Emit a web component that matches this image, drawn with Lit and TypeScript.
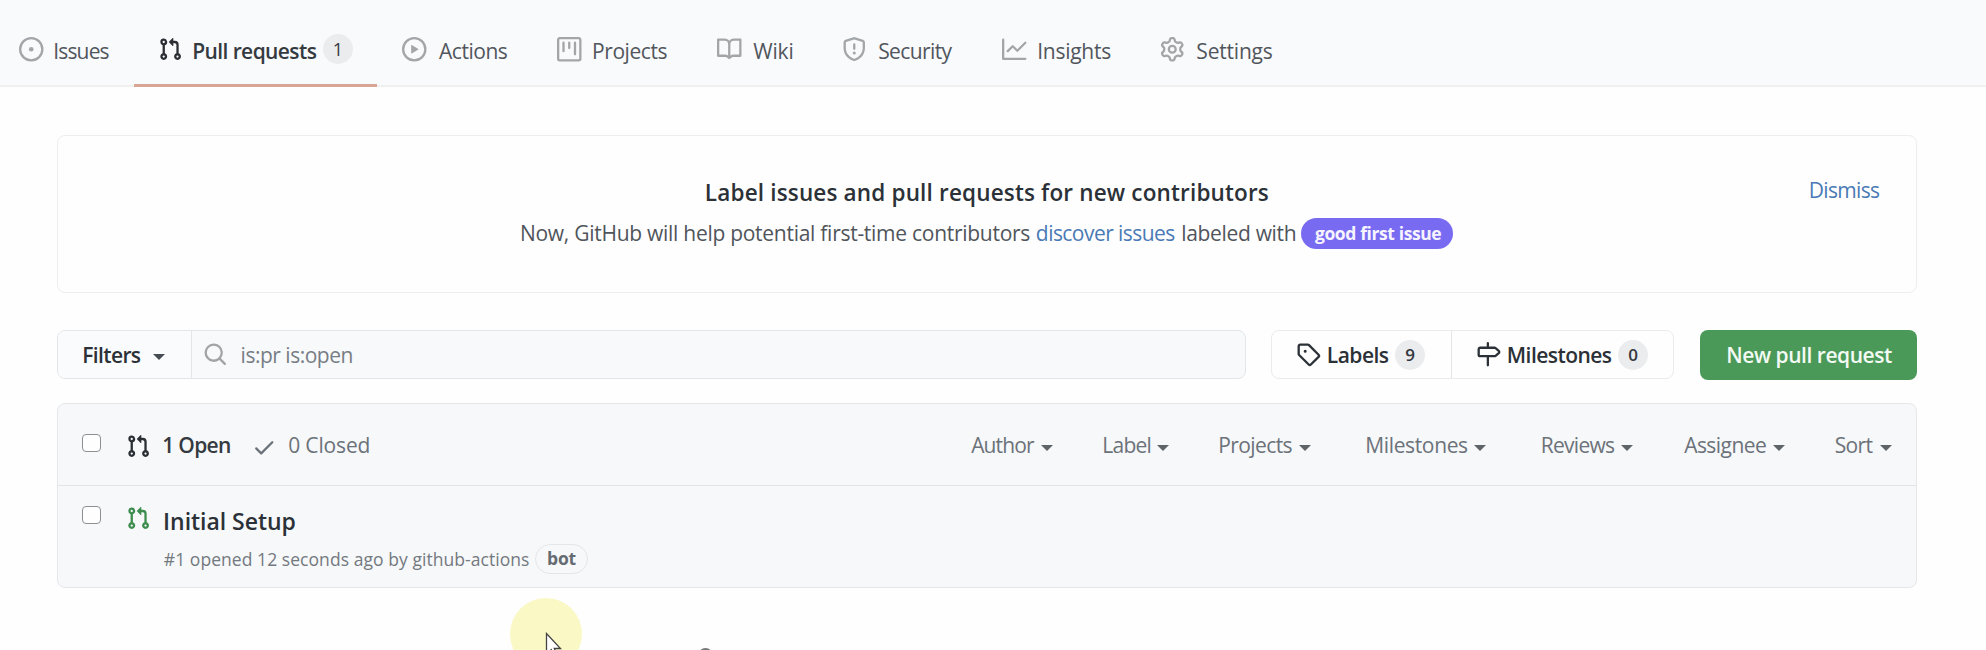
import { LitElement, html, svg, css, TemplateResult } from "lit";
import { customElement, property } from "lit/decorators.js";

const ICONS: Record<string, TemplateResult> = {
  issue: svg`<path d="M8 9.5a1.5 1.5 0 1 0 0-3 1.5 1.5 0 0 0 0 3Z"/><path d="M8 0a8 8 0 1 1 0 16A8 8 0 0 1 8 0ZM1.5 8a6.5 6.5 0 1 0 13 0 6.5 6.5 0 0 0-13 0Z"/>`,
  pr: svg`<path d="M1.5 3.25a2.25 2.25 0 1 1 3 2.122v5.256a2.251 2.251 0 1 1-1.5 0V5.372A2.25 2.25 0 0 1 1.5 3.25Zm5.677-.177L9.573.677A.25.25 0 0 1 10 .854V2.5h1A2.5 2.5 0 0 1 13.5 5v5.628a2.251 2.251 0 1 1-1.5 0V5a1 1 0 0 0-1-1h-1v1.646a.25.25 0 0 1-.427.177L7.177 3.427a.25.25 0 0 1 0-.354ZM3.75 2.5a.75.75 0 1 0 0 1.5.75.75 0 0 0 0-1.5Zm0 9.5a.75.75 0 1 0 0 1.5.75.75 0 0 0 0-1.5Zm8.25.75a.75.75 0 1 0 1.5 0 .75.75 0 0 0-1.5 0Z"/>`,
  play: svg`<path d="M8 0a8 8 0 1 1 0 16A8 8 0 0 1 8 0ZM1.5 8a6.5 6.5 0 1 0 13 0 6.5 6.5 0 0 0-13 0Zm4.879-2.773 4.264 2.559a.25.25 0 0 1 0 .428l-4.264 2.559A.25.25 0 0 1 6 10.559V5.442a.25.25 0 0 1 .379-.215Z"/>`,
  project: svg`<path d="M1.75 0h12.5C15.216 0 16 .784 16 1.75v12.5A1.75 1.75 0 0 1 14.25 16H1.75A1.75 1.75 0 0 1 0 14.25V1.75C0 .784.784 0 1.75 0ZM1.5 1.75v12.5c0 .138.112.25.25.25h12.5a.25.25 0 0 0 .25-.25V1.75a.25.25 0 0 0-.25-.25H1.75a.25.25 0 0 0-.25.25ZM11.75 3a.75.75 0 0 1 .75.75v7.5a.75.75 0 0 1-1.5 0v-7.5a.75.75 0 0 1 .75-.75Zm-8.25.75a.75.75 0 0 1 1.5 0v5.5a.75.75 0 0 1-1.5 0ZM8 3a.75.75 0 0 1 .75.75v3.5a.75.75 0 0 1-1.5 0v-3.5A.75.75 0 0 1 8 3Z"/>`,
  book: svg`<path d="M0 1.75A.75.75 0 0 1 .75 1h4.253c1.227 0 2.317.59 3 1.501A3.743 3.743 0 0 1 11.006 1h4.245a.75.75 0 0 1 .75.75v10.5a.75.75 0 0 1-.75.75h-4.507a2.25 2.25 0 0 0-1.591.659l-.622.621a.75.75 0 0 1-1.06 0l-.622-.621A2.25 2.25 0 0 0 5.258 13H.75a.75.75 0 0 1-.75-.75Zm7.251 10.324.004-5.073-.002-2.253A2.25 2.25 0 0 0 5.003 2.5H1.5v9h3.757a3.75 3.75 0 0 1 1.994.574ZM8.755 4.75l-.004 7.322a3.752 3.752 0 0 1 1.992-.572H14.5v-9h-3.495a2.25 2.25 0 0 0-2.25 2.25Z"/>`,
  shield: svg`<path d="M7.467.133a1.748 1.748 0 0 1 1.066 0l5.25 1.68A1.75 1.75 0 0 1 15 3.48V7c0 1.566-.32 3.182-1.303 4.682-.983 1.498-2.585 2.813-5.032 3.855a1.697 1.697 0 0 1-1.33 0c-2.447-1.042-4.049-2.357-5.032-3.855C1.32 10.182 1 8.566 1 7V3.48a1.75 1.75 0 0 1 1.217-1.667Zm.61 1.429a.25.25 0 0 0-.153 0l-5.25 1.68a.25.25 0 0 0-.174.238V7c0 1.358.275 2.666 1.057 3.86.784 1.194 2.121 2.34 4.366 3.297a.196.196 0 0 0 .154 0c2.245-.956 3.582-2.104 4.366-3.298C13.225 9.666 13.5 8.36 13.5 7V3.48a.251.251 0 0 0-.174-.237l-5.25-1.68ZM8.75 4.75v3a.75.75 0 0 1-1.5 0v-3a.75.75 0 0 1 1.5 0ZM9 10.5a1 1 0 1 1-2 0 1 1 0 0 1 2 0Z"/>`,
  graph: svg`<path d="M1.5 1.75V13.5h13.75a.75.75 0 0 1 0 1.5H.75a.75.75 0 0 1-.75-.75V1.75a.75.75 0 0 1 1.5 0Zm14.28 2.53-5.25 5.25a.75.75 0 0 1-1.06 0L7 7.06 4.28 9.78a.751.751 0 0 1-1.042-.018.751.751 0 0 1-.018-1.042l3.25-3.25a.75.75 0 0 1 1.06 0L10 7.94l4.72-4.72a.751.751 0 0 1 1.042.018.751.751 0 0 1 .018 1.042Z"/>`,
  gear: svg`<path d="M8 0a8.2 8.2 0 0 1 .701.031C9.444.095 9.99.645 10.16 1.29l.288 1.107c.018.066.079.158.212.224.231.114.454.243.668.386.123.082.233.09.299.071l1.103-.303c.644-.176 1.392.021 1.82.63.27.385.506.792.704 1.218.315.675.111 1.422-.364 1.891l-.814.806c-.049.048-.098.147-.088.294.016.257.016.515 0 .772-.01.147.038.246.088.294l.814.806c.475.469.679 1.216.364 1.891a7.977 7.977 0 0 1-.704 1.217c-.428.61-1.176.807-1.82.63l-1.102-.302c-.067-.019-.177-.011-.3.071a5.909 5.909 0 0 1-.668.386c-.133.066-.194.158-.211.224l-.29 1.106c-.168.646-.715 1.196-1.458 1.26a8.006 8.006 0 0 1-1.402 0c-.743-.064-1.289-.614-1.458-1.26l-.289-1.106c-.018-.066-.079-.158-.212-.224a5.738 5.738 0 0 1-.668-.386c-.123-.082-.233-.09-.299-.071l-1.103.303c-.644.176-1.392-.021-1.82-.63a8.12 8.12 0 0 1-.704-1.218c-.315-.675-.111-1.422.363-1.891l.815-.806c.05-.048.098-.147.088-.294a6.214 6.214 0 0 1 0-.772c.01-.147-.038-.246-.088-.294l-.815-.806C.635 6.045.431 5.298.746 4.623a7.92 7.92 0 0 1 .704-1.217c.428-.61 1.176-.807 1.82-.63l1.102.302c.067.019.177.011.3-.071.214-.143.437-.272.668-.386.133-.066.194-.158.211-.224l.29-1.106C6.009.645 6.556.095 7.299.03 7.53.01 7.764 0 8 0Zm-.571 1.525c-.036.003-.108.036-.137.146l-.289 1.105c-.147.561-.549.967-.998 1.189-.173.086-.34.183-.5.29-.417.278-.97.423-1.529.27l-1.103-.303c-.109-.03-.175.016-.195.045-.22.312-.412.644-.573.99-.014.031-.021.11.059.19l.815.806c.411.406.562.957.53 1.456a4.709 4.709 0 0 0 0 .582c.032.499-.119 1.05-.53 1.456l-.815.806c-.081.08-.073.159-.059.19.162.346.353.677.573.989.02.03.085.076.195.046l1.102-.303c.56-.153 1.113-.008 1.53.27.161.107.328.204.501.29.447.222.85.629.997 1.189l.289 1.105c.029.109.101.143.137.146a6.6 6.6 0 0 0 1.142 0c.036-.003.108-.036.137-.146l.289-1.105c.147-.561.549-.967.998-1.189.173-.086.34-.183.5-.29.417-.278.97-.423 1.529-.27l1.103.303c.109.029.175-.016.195-.045.22-.313.411-.644.573-.99.014-.031.021-.11-.059-.19l-.815-.806c-.411-.406-.562-.957-.53-1.456a4.709 4.709 0 0 0 0-.582c-.032-.499.119-1.05.53-1.456l.815-.806c.081-.08.073-.159.059-.19a6.464 6.464 0 0 0-.573-.989c-.02-.03-.085-.076-.195-.046l-1.102.303c-.56.153-1.113.008-1.53-.27a4.44 4.44 0 0 0-.501-.29c-.447-.222-.85-.629-.997-1.189l-.289-1.105c-.029-.11-.101-.143-.137-.146a6.6 6.6 0 0 0-1.142 0ZM11 8a3 3 0 1 1-6 0 3 3 0 0 1 6 0ZM9.5 8a1.5 1.5 0 1 0-3.001.001A1.5 1.5 0 0 0 9.5 8Z"/>`,
  search: svg`<path d="M10.68 11.74a6 6 0 0 1-7.922-8.982 6 6 0 0 1 8.982 7.922l3.04 3.04a.749.749 0 0 1-.326 1.275.749.749 0 0 1-.734-.215ZM11.5 7a4.499 4.499 0 1 0-8.997 0A4.499 4.499 0 0 0 11.5 7Z"/>`,
  tag: svg`<path d="M1 7.775V2.75C1 1.784 1.784 1 2.75 1h5.025c.464 0 .91.184 1.238.513l6.25 6.25a1.75 1.75 0 0 1 0 2.474l-5.026 5.026a1.75 1.75 0 0 1-2.474 0l-6.25-6.25A1.752 1.752 0 0 1 1 7.775Zm1.5 0c0 .066.026.13.073.177l6.25 6.25a.25.25 0 0 0 .354 0l5.025-5.025a.25.25 0 0 0 0-.354l-6.25-6.25a.25.25 0 0 0-.177-.073H2.75a.25.25 0 0 0-.25.25ZM6 5a1 1 0 1 1 0 2 1 1 0 0 1 0-2Z"/>`,
  milestone: svg`<path d="M7.75 0a.75.75 0 0 1 .75.75V3h3.634c.414 0 .814.147 1.13.414l2.07 1.75a1.75 1.75 0 0 1 0 2.672l-2.07 1.75a1.75 1.75 0 0 1-1.13.414H8.5v5.25a.75.75 0 0 1-1.5 0V10H2.75A1.75 1.75 0 0 1 1 8.25v-3.5C1 3.784 1.784 3 2.75 3H7V.75A.75.75 0 0 1 7.75 0Zm4.384 8.5a.25.25 0 0 0 .161-.06l2.07-1.75a.248.248 0 0 0 0-.38l-2.07-1.75a.25.25 0 0 0-.161-.06H2.75a.25.25 0 0 0-.25.25v3.5c0 .138.112.25.25.25h9.384Z"/>`,
  check: svg`<path d="M13.78 4.22a.75.75 0 0 1 0 1.06l-7.25 7.25a.75.75 0 0 1-1.06 0L2.22 9.28a.751.751 0 0 1 .018-1.042.751.751 0 0 1 1.042-.018L6 10.94l6.72-6.72a.75.75 0 0 1 1.06 0Z"/>`,
};

@customElement("ui-icon")
class UiIcon extends LitElement {
  @property() name = "issue";
  static styles = css`
    :host { display: block; flex: none; width: 24.5px; height: 24.5px; }
    svg { display: block; width: 100%; height: 100%; fill: currentColor; overflow: visible; }
  `;
  render() {
    return html`<svg viewBox="0 0 16 16" aria-hidden="true">${ICONS[this.name]}</svg>`;
  }
}

/* A single line of text tracked so that its ink fills a box `w` pixels wide. */
@customElement("ui-text")
class UiText extends LitElement {
  @property({ type: Number }) w = 0;
  @property() t = "";
  static styles = css`
    :host { display: block; flex: none; white-space: nowrap; line-height: 30px; font-variant-ligatures: none; }
    .line { display: block; }
  `;
  render() {
    return html`<span class="line">${this.t}</span>`;
  }
  updated() {
    const cs = getComputedStyle(this);
    const ctx = document.createElement("canvas").getContext("2d")!;
    // Measured at ten times the size, since ink bounds come back in whole pixels.
    ctx.font = `${cs.fontWeight} ${parseFloat(cs.fontSize) * 10}px ${cs.fontFamily}`;
    const m = ctx.measureText(this.t);
    const ink = (m.actualBoundingBoxLeft + m.actualBoundingBoxRight) / 10;
    const inset = 1.2;
    this.style.width = `${this.w}px`;
    this.style.textIndent = `${m.actualBoundingBoxLeft / 10 + inset}px`;
    if (this.t.length > 1) this.style.letterSpacing = `${(this.w - inset - 0.3 - ink) / (this.t.length - 1)}px`;
  }
}

const TABS: [string, string, number, string?][] = [
  ["issue", "Issues", 55],
  ["pr", "Pull requests", 123.5, "1"],
  ["play", "Actions", 69.5],
  ["project", "Projects", 74],
  ["book", "Wiki", 40],
  ["shield", "Security", 74.5],
  ["graph", "Insights", 72.5],
  ["gear", "Settings", 76],
];

const MENUS: [string, number, string][] = [
  ["Author", 64.5, ""],
  ["Label", 47.5, ""],
  ["Projects", 73, ""],
  ["Milestones", 101.5, "wide"],
  ["Reviews", 73, "wide"],
  ["Assignee", 83, ""],
  ["Sort", 38.5, ""],
];

@customElement("app-root")
class AppRoot extends LitElement {
  static styles = css`
    :host {
      display: block; position: relative; width: 1986px; height: 650px; overflow: hidden;
      background: #fefefe; color: #2b3137;
      font-family: "Open Sans", "Noto Sans", sans-serif; font-size: 21px;
    }
    * { box-sizing: border-box; }
    .nav { display: flex; height: 87px; background: #f9fafc; border-bottom: 2px solid #f0f0f1; padding-top: 11px; }
    .tab { display: flex; align-items: center; height: 76px; padding: 0 24.9px; color: #a3a6a9; }
    .tab:first-child { padding-left: 19px; padding-right: 24.5px; }
    .tab ui-text { margin-left: 11.3px; padding-top: 4px; color: #51565c; }
    .tab:first-child ui-text { margin-left: 10.5px; }
    .tab.active { color: #2b2f34; border-bottom: 3px solid #d9a594; padding-top: 3px; padding-right: 24.2px; }
    .tab.active ui-text { color: #353a40; font-weight: 600; margin-left: 10px; }
    .count {
      width: 30px; height: 30px; border-radius: 15px; background: #ebecee; color: #33383e;
      font-size: 18px; line-height: 30px; text-align: center; margin-left: 6.5px; flex: none;
    }
    .tab .count { margin-top: -1px; }

    .page { padding: 48px 69px 0 57px; }
    .banner {
      display: grid; grid-template-columns: 1fr auto 1fr; height: 158px;
      border: 1.5px solid #eeeeef; border-radius: 8px; padding: 42px 0 0;
    }
    .mid { grid-column: 2; display: flex; flex-direction: column; align-items: center; }
    .title { font-size: 22.5px; font-weight: 600; }
    .para { display: flex; align-items: center; margin-top: 10px; color: #50555b; }
    .link { color: #4a7ab5; }
    .discover { margin: 0 7px 0 6px; }
    .pill {
      margin-left: 6px; height: 30.5px; border-radius: 16px; background: #796bf1; color: #f6f4ff;
      padding: 0 12px 0 12.5px; font-size: 17.5px; font-weight: 700;
    }
    .dismiss { justify-self: end; margin-right: 36.5px; margin-top: -3px; }

    .bar { display: flex; align-items: stretch; height: 49px; margin-top: 37px; }
    .query { display: flex; width: 1189px; border: 1.5px solid #e3e6e8; border-radius: 8px; background: #f8f9fb; overflow: hidden; }
    .filters { display: flex; align-items: center; width: 133.5px; padding-left: 25px; border-right: 1.5px solid #e3e6e8; background: #fafbfc; font-weight: 600; }
    .caret { width: 0; height: 0; border: 6px solid transparent; border-top-color: #5f6469; border-bottom: 0; flex: none; }
    .filters .caret { margin: 5px 0 0 12.5px; border-top-color: #474c52; }
    .search { display: flex; align-items: center; padding-left: 11px; color: #777d84; }
    .search ui-icon { color: #a2a5a8; }
    .search ui-text { margin-left: 14px; }
    .group { display: flex; margin-left: 25px; width: 403px; border: 1.5px solid #e9ebec; border-radius: 8px; font-weight: 600; }
    .seg { display: flex; align-items: center; padding-left: 24px; }
    .seg + .seg { border-left: 1.5px solid #e3e6e8; }
    .labels { width: 179px; }
    .seg ui-text { margin-left: 7px; }
    .seg .count { font-weight: 600; font-size: 17px; }
    .new {
      margin: -.5px 0 -.5px 25.5px; width: 217.5px; border-radius: 8px; background: #4a9959; color: #f3faf4;
      display: flex; align-items: center; padding-left: 27.5px; font-weight: 600;
    }

    .list { margin-top: 24px; height: 185px; border: 1.5px solid #e5e7ea; border-radius: 8px; background: #f6f8fa; }
    .head { display: flex; align-items: flex-start; height: 82px; padding: 26px 24.5px 0 24px; border-bottom: 1.5px solid #e2e5e8; color: #6c7279; }
    .box { width: 18.5px; height: 18.5px; border: 1.5px solid #8d9093; border-radius: 4px; background: #fefefe; flex: none; margin-top: 3.5px; }
    .head ui-icon, .row ui-icon { margin-left: 25.5px; margin-top: 4px; }
    .head .pr { color: #2b2f34; }
    .open { margin-left: 12px; color: #353a40; font-weight: 600; }
    .head .check { margin-left: 21.5px; margin-top: 5px; }
    .closed { margin-left: 12px; }
    .menus { display: flex; margin-left: auto; gap: 50px; }
    .menu { display: flex; }
    .menu.wide { margin-left: 5.5px; }
    .menu .caret { margin: 15px 0 0 6.5px; }
    .row { display: flex; align-items: flex-start; padding: 16px 24px 0; }
    .row ui-icon { color: #3d8d4e; }
    .text { margin-left: 12.5px; margin-top: 4px; }
    .name { font-size: 23px; font-weight: 600; margin-left: 1px; }
    .meta { display: flex; align-items: center; margin-top: 8px; font-size: 17.5px; color: #747980; }
    .bot { margin-left: 6px; height: 30px; border: 1.5px solid #e4e6e9; border-radius: 15px; padding: 0 11px; font-weight: 700; color: #666b72; }
    .bot ui-text { line-height: 27px; }

    .halo { position: absolute; left: 510px; top: 598px; width: 72px; height: 72px; border-radius: 50%; background: #faf8c4; }
    .cursor { position: absolute; left: 545px; top: 632px; width: 20px; height: 28px; }
    .octo { position: absolute; left: 698px; top: 648px; width: 15px; height: 15px; border-radius: 50%; background: #75787b; }
  `;

  render() {
    return html`
      <nav class="nav">
        ${TABS.map(([icon, label, w, count]) => html`
          <div class="tab ${count ? "active" : ""}">
            <ui-icon name=${icon}></ui-icon><ui-text w=${w} t=${label}></ui-text>
            ${count ? html`<span class="count">${count}</span>` : ""}
          </div>`)}
      </nav>
      <main class="page">
        <section class="banner">
          <div class="mid">
            <ui-text class="title" w="562.5" t="Label issues and pull requests for new contributors"></ui-text>
            <div class="para">
              <ui-text w="509" t="Now, GitHub will help potential first-time contributors"></ui-text>
              <ui-text class="link discover" w="139" t="discover issues"></ui-text>
              <ui-text w="113.5" t="labeled with"></ui-text>
              <div class="pill"><ui-text w="127.5" t="good first issue"></ui-text></div>
            </div>
          </div>
          <ui-text class="link dismiss" w="70" t="Dismiss"></ui-text>
        </section>
        <section class="bar">
          <div class="query">
            <div class="filters"><ui-text w="57.5" t="Filters"></ui-text><i class="caret"></i></div>
            <div class="search"><ui-icon name="search"></ui-icon><ui-text w="111" t="is:pr is:open"></ui-text></div>
          </div>
          <div class="group">
            <div class="seg labels"><ui-icon name="tag"></ui-icon><ui-text w="61" t="Labels"></ui-text><span class="count">9</span></div>
            <div class="seg"><ui-icon name="milestone"></ui-icon><ui-text w="104" t="Milestones"></ui-text><span class="count">0</span></div>
          </div>
          <div class="new"><ui-text w="165" t="New pull request"></ui-text></div>
        </section>
        <section class="list">
          <div class="head">
            <i class="box"></i>
            <ui-icon class="pr" name="pr"></ui-icon>
            <ui-text class="open" w="67.5" t="1 Open"></ui-text>
            <ui-icon class="check" name="check"></ui-icon>
            <ui-text class="closed" w="81" t="0 Closed"></ui-text>
            <div class="menus">
              ${MENUS.map(([t, w, c]) => html`<div class="menu ${c}"><ui-text w=${w} t=${t}></ui-text><i class="caret"></i></div>`)}
            </div>
          </div>
          <div class="row">
            <i class="box"></i>
            <ui-icon name="pr"></ui-icon>
            <div class="text">
              <ui-text class="name" w="131" t="Initial Setup"></ui-text>
              <div class="meta">
                <ui-text w="366" t="#1 opened 12 seconds ago by github-actions"></ui-text>
                <div class="bot"><ui-text w="29" t="bot"></ui-text></div>
              </div>
            </div>
          </div>
        </section>
      </main>
      <div class="halo"></div>
      <div class="octo"></div>
      <svg class="cursor" viewBox="0 0 20 28"><path d="M1.5 1.5V22l4.7-4.3 3.3 7.3 3-1.3-3.2-7.2H15.5Z" fill="#fff" stroke="#444" stroke-width="1.3"/></svg>
    `;
  }
}
